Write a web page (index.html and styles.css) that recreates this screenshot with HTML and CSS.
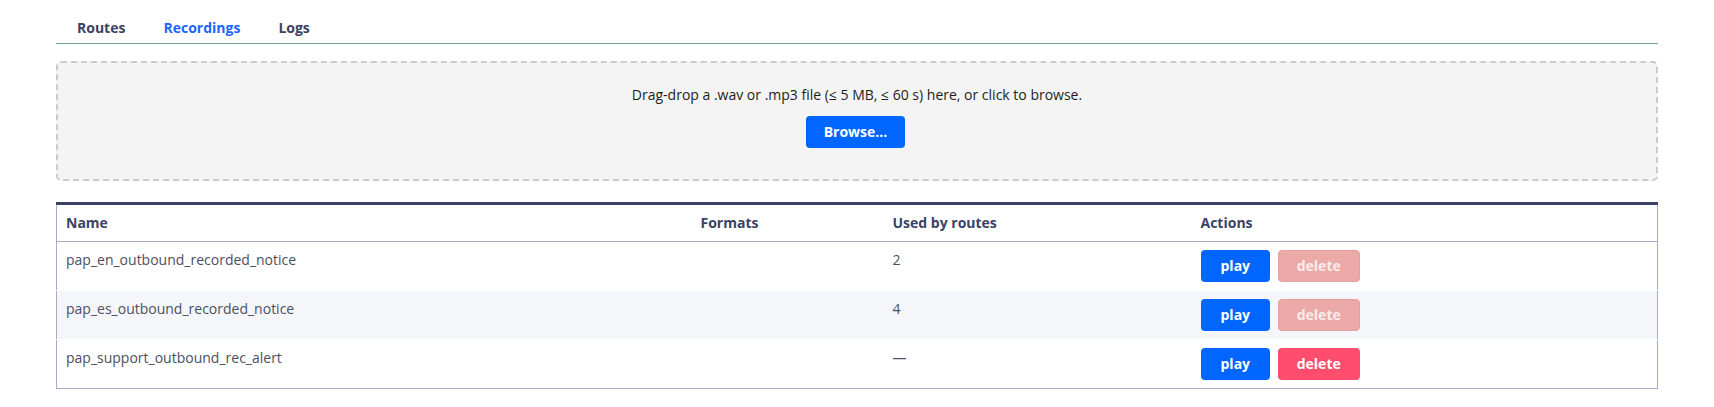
FILE: index.html
```html
<!DOCTYPE html>
<html>
<head>
<title>Recordings</title>
<link rel="stylesheet" href="styles.css">
</head>
<body>

<div class="page">
  <nav class="tabs">
    <a href="#routes" class="tab">Routes</a>
    <a href="#recordings" class="tab active">Recordings</a>
    <a href="#logs" class="tab">Logs</a>
  </nav>

  <div class="dropzone">
    <p>Drag-drop a .wav or .mp3 file (&le; 5 MB, &le; 60 s) here, or click to browse.</p>
    <button type="button" class="btn btn-primary">Browse...</button>
  </div>

  <table class="recordings">
    <colgroup>
      <col class="col-name">
      <col class="col-formats">
      <col class="col-used">
      <col class="col-actions">
    </colgroup>
    <thead>
      <tr>
        <th>Name</th>
        <th>Formats</th>
        <th>Used by routes</th>
        <th>Actions</th>
      </tr>
    </thead>
    <tbody>
      <tr>
        <td>pap_en_outbound_recorded_notice</td>
        <td></td>
        <td>2</td>
        <td>
          <button type="button" class="btn btn-primary">play</button>
          <button type="button" class="btn btn-danger" disabled>delete</button>
        </td>
      </tr>
      <tr>
        <td>pap_es_outbound_recorded_notice</td>
        <td></td>
        <td>4</td>
        <td>
          <button type="button" class="btn btn-primary">play</button>
          <button type="button" class="btn btn-danger" disabled>delete</button>
        </td>
      </tr>
      <tr>
        <td>pap_support_outbound_rec_alert</td>
        <td></td>
        <td>&mdash;</td>
        <td>
          <button type="button" class="btn btn-primary">play</button>
          <button type="button" class="btn btn-danger">delete</button>
        </td>
      </tr>
    </tbody>
  </table>
</div>

</body>
</html>
```

FILE: styles.css
```css
body {
  margin: 0;
  font-family: "Open Sans", "Liberation Sans", sans-serif;
  font-size: 14px;
  line-height: 20px;
  color: #4b5060;
  background: #fff;
}

.page {
  padding: 10px 56px 0;
}

/* tab strip */
.tabs {
  display: flex;
  border-bottom: 1px solid #78a48b;
  padding-left: 2px;
}

.tab {
  padding: 8px 19px 5px;
  font-weight: bold;
  color: #3d4160;
  text-decoration: none;
}

.tab.active {
  color: #1a66ff;
}

/* upload area */
.dropzone {
  margin-top: 17px;
  padding: 22px 0 31px;
  background: #f4f4f4;
  border: 2px dashed #cbcbcb;
  border-radius: 5px;
  text-align: center;
  color: #1d1d1d;
}

.dropzone p {
  margin: 0 0 11px;
}

.btn {
  font-family: inherit;
  font-size: 14px;
  font-weight: bold;
  line-height: 20px;
  padding: 5px 19px;
  border: 1px solid transparent;
  border-radius: 4px;
  color: #fff;
  cursor: pointer;
}

.dropzone .btn {
  padding: 5px 17px;
  margin-right: 3px;
}

.btn-primary {
  background: #0066ff;
}

.btn-danger {
  background: #ff4d6d;
  margin-left: 4px;
  padding: 5px 18px;
}

.btn-danger:disabled {
  background: #eba9a8;
  border-color: #e39f9e;
  color: #fbecec;
  cursor: default;
}

/* recordings list */
.recordings {
  width: 100%;
  margin-top: 21px;
  table-layout: fixed;
  border-collapse: collapse;
  border-top: 3px solid #3a4266;
  border-left: 1px solid #a3aec6;
  border-right: 1px solid #a3aec6;
  border-bottom: 1px solid #a3aec6;
}

.col-name { width: 635px; }
.col-formats { width: 192px; }
.col-used { width: 308px; }

.recordings th,
.recordings td {
  padding: 8px 9px;
  text-align: left;
  vertical-align: top;
}

.recordings th {
  color: #3a4266;
  font-weight: bold;
  border-bottom: 1px solid #a3aec6;
}

.recordings td {
  height: 32px;
  border-bottom: 1px solid #fff;
}

.recordings tbody tr:nth-child(even) {
  background: #f5f6fa;
}

.recordings tbody tr:last-child td {
  border-bottom: none;
}
```
